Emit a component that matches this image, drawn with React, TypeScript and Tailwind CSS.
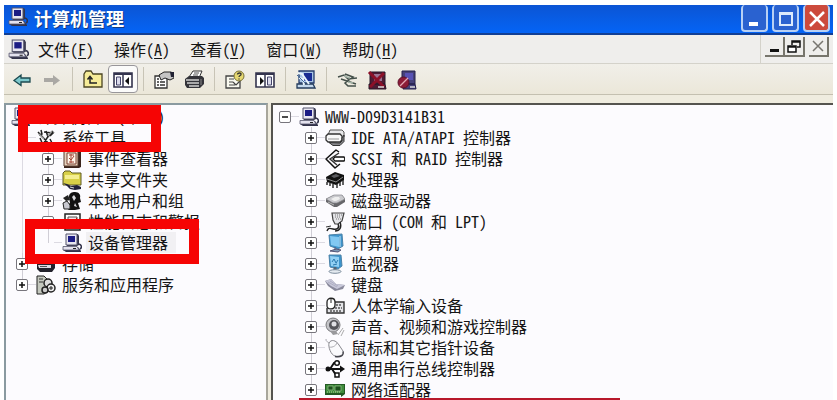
import React from "react";

type IconProps = { className?: string };

const Svg = ({ children, className = "size-5" }: { children: React.ReactNode; className?: string }) => (
  <svg viewBox="0 0 20 20" className={`${className} shrink-0`} fill="none" aria-hidden="true">
    {children}
  </svg>
);

const Computer = ({ className }: IconProps) => (
  <Svg className={className}>
    <path d="M5 1h11l1 2v9l-2 1H5z" fill="#33334a" />
    <path d="M4 1h11v11H4z" fill="#e8e6f0" stroke="#55556c" />
    <path d="M6 3h7v6H6z" fill="#1c1c84" />
    <path d="M2 14h14l3 4v1H4l-3-2z" fill="#33334a" />
    <path d="M1 13.500h14l2 3.500H1z" fill="#e4e2ee" stroke="#55556c" strokeWidth=".8" />
    <path d="M11 15.500h3" stroke="#222" />
    <path d="M17 11c3 1 3 4 1 5" stroke="#33334a" strokeWidth="1.500" />
  </Svg>
);

const Tools = () => (
  <Svg>
    <path d="M2 4l12 13M5 2l1 4-3 1M8 4l9 1-3 3M17 3l-6 7-5 8M4 10l3 7M10 3l2 6M14 11l3 6" stroke="#222" strokeWidth="1.500" />
    <path d="M3 6l5 5M12 8l4-5" stroke="#999" strokeWidth="1.500" />
  </Svg>
);

const EventViewer = () => (
  <Svg>
    <path d="M2 2l2-1h15v17l-2 1H2z" fill="#3a241c" />
    <path d="M2 2h14v15H2z" fill="#e6d2be" stroke="#5a3a2c" />
    <path d="M5 4h9v11H5z" fill="#fff6ea" stroke="#7a4030" />
    <path d="M7 6h5M7 9l2 2 3-4M7 13h5M9 5v9" stroke="#a04030" />
  </Svg>
);

const SharedFolder = () => (
  <Svg>
    <path d="M1 3l2-2h5l2 2h9v12H1z" fill="#d8d048" stroke="#5c5820" />
    <path d="M3 5h14v4H3z" fill="#f4ee90" />
    <path d="M1 13l4 1 4 2 6-1 4 2v2l-6 1-5-1-3-3z" fill="#22223a" />
    <path d="M8 17l4 1" stroke="#ddd" />
  </Svg>
);

const Users = () => (
  <Svg>
    <path d="M7 6c0-4 3-5 6-5 4 0 6 3 5 6l1 4-3 1 2 6-5 1H7l-4-3 5-4z" fill="#111" />
    <path d="M10 6l2-2 2 3-2 3zM13 12l2 4-3-1z" fill="#d8d8dc" />
    <path d="M1 12l4-2 3 4v4H2z" fill="#c8c8d0" stroke="#222" />
    <path d="M1 7l5-3 2 5-4 1z" fill="#222" />
  </Svg>
);

const Performance = () => (
  <Svg>
    <path d="M3 2h15v16H3z" fill="#fff" stroke="#222" strokeWidth="1.500" />
    <path d="M6 5h9v7H6z" fill="#f0e4e8" stroke="#555" />
    <path d="M6 11l3-4 2 3 4-4" stroke="#a22" />
    <path d="M6 15h9" stroke="#222" strokeWidth="2" />
  </Svg>
);

const Storage = () => (
  <Svg>
    <path d="M1 4h13l5 3v7l-3 4H4l-3-3z" fill="#22222c" />
    <path d="M2 5h11v4H2zM2 11h13v3H3z" fill="#dcdce4" />
    <path d="M4 12.500h7M4 7h6" stroke="#555" />
  </Svg>
);

const Services = () => (
  <Svg>
    <path d="M1 1h7l3 3v13l-3 2H1z" fill="#c4c8be" stroke="#222" />
    <path d="M3 4h4M3 7h4" stroke="#333" />
    <circle cx="12" cy="8" r="4" fill="#ddd" stroke="#222" strokeWidth="1.500" />
    <circle cx="15" cy="13" r="4" fill="#eee" stroke="#222" strokeWidth="1.500" />
    <circle cx="9" cy="15" r="3" fill="#ccc" stroke="#222" strokeWidth="1.500" />
    <path d="M15 11v4M13 13h4" stroke="#222" />
  </Svg>
);

const Ide = () => (
  <Svg>
    <path d="M5 2h12l2 2v5l-2 2H5L3 7z" fill="#e8e8ea" stroke="#555" />
    <path d="M1 8l2-2h12l2 2v4l-2 2H3l-2-2z" fill="#f8f8f8" stroke="#333" strokeWidth="1.300" />
    <path d="M4 14.500l4 3h7l4-4V7l-2 3v3l-2 2z" fill="#88888c" stroke="#333" />
    <path d="M3 11h11" stroke="#999" />
  </Svg>
);

const Scsi = () => (
  <Svg>
    <path d="M14 3l-3-2L1 10l9 9 5-4" stroke="#111" strokeWidth="1.500" strokeLinejoin="round" />
    <path d="M14 4L5 10l7 6" stroke="#333" strokeWidth="1.400" />
    <path d="M8 10l2-2h9l1 2-1 2h-9z" fill="#fff" stroke="#111" strokeWidth="1.300" />
  </Svg>
);

const Cpu = () => (
  <Svg>
    <path d="M1 7l9-5 9 3v5l-8 5-9-3z" fill="#111" />
    <path d="M6 6l5-2 4 2-6 2z" fill="#5c5c60" />
    <path d="M2 12v3M5 13v3M8 14v4M12 14v4M15 12v4M18 10v5" stroke="#222" strokeWidth="1.400" />
    <path d="M2 9l9 3 7-5" stroke="#aaa" strokeWidth=".8" />
  </Svg>
);

const Disk = () => (
  <Svg>
    <path d="M1 8l8-4h8l3 4v3l-8 5H9l-8-5z" fill="#66666a" />
    <path d="M1 8l8-4h8l3 4-8 4H8z" fill="#cacace" stroke="#88888c" strokeWidth=".7" />
    <path d="M6 8l4-2h4l1 2-4 2H9z" fill="#eee" />
    <path d="M3 11l6 3" stroke="#bbb" />
  </Svg>
);

const Port = () => (
  <Svg>
    <path d="M7 1h12l-2 8-4 3h-3L8 8z" fill="#e4e4e8" stroke="#444" strokeWidth="1.200" />
    <path d="M10 3h7M10 5h6M11 7h5" stroke="#777" strokeDasharray="1 1" />
    <path d="M13 12c2 4-1 6-5 5s-5-1-6 2M15 10c2 5 0 9-5 9" stroke="#222" strokeWidth="1.400" />
    <path d="M1 15l5-1" stroke="#333" />
  </Svg>
);

const BluePc = () => (
  <Svg>
    <path d="M4 2l13-1 1 12-5 3-8-3z" fill="#3d94cc" stroke="#4c82a8" />
    <path d="M5 3l9 1v10l-8-2z" fill="#82c8f2" />
    <path d="M15 3v11" stroke="#c6e4f6" />
    <path d="M10 14v3M5 18l6-2 5 1-3 2z" fill="#7c98b4" stroke="#557" />
  </Svg>
);

const Monitor = () => (
  <Svg>
    <path d="M4 1l12 0 1 11-4 3-8-2z" fill="#3d94cc" stroke="#4c82a8" />
    <path d="M5 2l9 1 0 10-8-1z" fill="#92d0f4" />
    <path d="M7 8l2-3 2 4 2-3M8 11l4-1" stroke="#2878ae" />
    <path d="M10 13v4" stroke="#567" strokeWidth="3" />
    <ellipse cx="10" cy="17.500" rx="6" ry="1.800" fill="#e4eaf0" stroke="#7c8c9c" />
  </Svg>
);

const Keyboard = () => (
  <Svg>
    <path d="M0 6l6-2 5 5 9 1-2 4-8 2-7-5z" fill="#8a8a9c" />
    <path d="M0 6l6-2 5 5 9 1-8 4-6-3z" fill="#c8c8da" />
    <path d="M3 7l9 5M5 6l8 5" stroke="#a4a4b8" strokeWidth=".7" />
  </Svg>
);

const Hid = () => (
  <Svg>
    <path d="M9 6h10v11H2v-5" fill="#e4e4e8" stroke="#333" strokeWidth="1.400" />
    <path d="M11 9h6M10 12h7M5 15h12" stroke="#555" strokeDasharray="2 1" strokeWidth="1.500" />
    <path d="M2 6c0-5 8-5 8 0v3c0 5-8 5-8 1z" fill="#fff" stroke="#222" strokeWidth="1.300" />
    <path d="M6 2v5" stroke="#222" />
  </Svg>
);

const Speaker = () => (
  <Svg>
    <circle cx="8" cy="8" r="7" fill="#c4c4c8" stroke="#77777a" />
    <circle cx="9" cy="8" r="5" fill="#55555a" />
    <circle cx="9" cy="7" r="2.500" fill="#e0e0e4" />
    <path d="M5 14l3 4 5-1-2-3z" fill="#99999c" />
    <path d="M13 18l5-7M16 19l3-6" stroke="#aaa" />
  </Svg>
);

const Mouse = () => (
  <Svg>
    <path d="M4 5c2-4 7-3 10 2l4 6c2 4-4 6-8 5-4-1-7-9-6-13z" fill="#fafafc" stroke="#88888e" />
    <path d="M4 9c4 1 8-2 8-5M4 5C2 3 1 4 1 1" stroke="#aaaab0" />
    <path d="M10 18.500c6 1 9-1 8-5" stroke="#44444c" strokeWidth="1.300" />
  </Svg>
);

const Usb = () => (
  <Svg>
    <path d="M2 10h16M5 10l4-6h4M7 10l4 6h3" stroke="#111" strokeWidth="1.900" />
    <circle cx="3" cy="10" r="2.500" fill="#111" />
    <path d="M15 6.500l5 3.500-5 3.500z" fill="#111" />
    <circle cx="12" cy="4" r="2.300" fill="#fff" stroke="#111" strokeWidth="1.500" />
    <path d="M10 14h4v4h-4z" fill="#fff" stroke="#111" strokeWidth="1.500" />
  </Svg>
);

const NetCard = () => (
  <Svg>
    <path d="M0 4h20v10l-4 3v-2H0z" fill="#245a24" />
    <path d="M1 5h18v8H1z" fill="#3f8c3c" />
    <path d="M3 6h5v4H3zM10 6h6v5h-6z" fill="#1c501c" stroke="#9cc490" strokeWidth=".7" />
    <path d="M2 12h13" stroke="#b8d4a0" strokeDasharray="1 1" />
  </Svg>
);

const Arrow = ({ forward = false }: { forward?: boolean }) => (
  <Svg>
    {forward ? (
      <path d="M2 8h9V5l7 5.500-7 5V12H2z" fill="#aaa8a4" />
    ) : (
      <path d="M18 8H9V5L2 10.500l7 5V12h9z" fill="#7cc8cc" stroke="#1c4a50" strokeWidth="1.300" />
    )}
  </Svg>
);

const UpFolder = () => (
  <Svg>
    <path d="M1 4l2-3h5l2 3h9v13H1z" fill="#f6ec98" stroke="#4a4422" strokeWidth="1.300" />
    <path d="M7 8v5h7M4.500 9.500L7 6.500l2.500 3" stroke="#222" strokeWidth="1.500" />
  </Svg>
);

const SplitPane = ({ flip = false }: { flip?: boolean }) => (
  <Svg>
    <path d="M1 3h18v14H1z" fill="#fff" stroke="#34344e" strokeWidth="1.600" />
    <path d="M1 4h18" stroke="#34344e" strokeWidth="2" />
    {flip ? (
      <>
        <path d="M12.500 7h4v8h-4z" fill="#dcdcec" stroke="#44446a" />
        <path d="M5 7l4 4-4 4z" fill="#111" />
      </>
    ) : (
      <>
        <path d="M3.500 7h4v8h-4z" fill="#dcdcec" stroke="#44446a" />
        <path d="M16 7l-4 4 4 4z" fill="#111" />
      </>
    )}
    <path d="M10 4v13" stroke="#34344e" strokeWidth="1.500" />
  </Svg>
);

const Properties = () => (
  <Svg>
    <path d="M1 6h12v12H1z" fill="#fff" stroke="#333" strokeWidth="1.300" />
    <path d="M3 9h2M3 12h2M3 15h2M6 12h5M6 15h5" stroke="#333" strokeWidth="1.400" />
    <path d="M5 5l5-3h7l3 2v4l-4 2-5-2-4 2z" fill="#c4c4c4" stroke="#222" />
    <path d="M16 2h4v5h-3z" fill="#223" />
  </Svg>
);

const Printer = () => (
  <Svg>
    <path d="M5 7l4-6h9l-3 7z" fill="#fff" stroke="#333" />
    <path d="M10 3h5M9 5h5" stroke="#555" />
    <path d="M1 9l4-3h13l2 2v6l-4 4H3l-2-3z" fill="#34343a" />
    <path d="M2 10h13M3 13h12M5 16h10" stroke="#d0d0d0" strokeWidth="1.300" />
    <path d="M17 9v6" stroke="#888" />
  </Svg>
);

const Help = () => (
  <Svg>
    <path d="M1 6h11l3 4v8H1z" fill="#fafaf0" stroke="#444" strokeWidth="1.300" />
    <path d="M4 9h5M4 12h4M4 15h6M8 12l3 3 4-4" stroke="#444" strokeWidth="1.200" />
    <circle cx="14" cy="6" r="5" fill="#e6d870" stroke="#77703a" />
    <path d="M12.500 4.500c0-2 4-2 3.500 0-.3 1-2 1-2 2.500M14 8.500v1" stroke="#333" strokeWidth="1.300" />
  </Svg>
);

const ScanComputer = () => (
  <Svg>
    <path d="M3 1h15v12H3z" fill="#a8c4e4" stroke="#243c6c" strokeWidth="1.300" />
    <path d="M8 3h8v8H8z" fill="#182c94" />
    <path d="M1 14h16l2 4H1z" fill="#c4d8ec" stroke="#243c5c" strokeWidth="1.300" />
    <path d="M2 3l4 1 7 10M3 8l4 1 1 6" stroke="#e8f4fc" strokeWidth="2" />
    <path d="M1 5l8 8" stroke="#446c9c" />
  </Svg>
);

const Plug = () => (
  <Svg>
    <path d="M1 7l6-2 4 4 9-1M4 9l6 2 9 3M8 4l8 3-8 6 3 3h8" stroke="#44504a" strokeWidth="1.500" />
    <path d="M7 6l6 2M11 12l5 1" stroke="#a4b4a8" strokeWidth="1.500" />
  </Svg>
);

const Uninstall = () => (
  <Svg>
    <path d="M3 2h15v12H3zM2 14h16l1 5H2z" fill="#501c34" stroke="#28182a" />
    <path d="M7 4h8v7H7z" fill="#9c7494" />
    <path d="M2 2l15 15M17 3L3 17" stroke="#8c1028" strokeWidth="3" />
    <path d="M11 17h6" stroke="#ddd" strokeWidth="1.500" />
  </Svg>
);

const Disable = () => (
  <Svg>
    <path d="M5 1h13v13H5zM7 14h11l1 5H6z" fill="#46427a" stroke="#24204a" />
    <path d="M8 3h8v7H8z" fill="#5852b4" />
    <circle cx="6.500" cy="12.500" r="5.500" fill="#8c1c38" stroke="#5c1028" />
    <path d="M3 16l8-8" stroke="#e4a8b4" strokeWidth="1.300" />
    <path d="M13 17h5" stroke="#ddd" strokeWidth="1.500" />
  </Svg>
);

type Item = {
  text: string;
  icon: React.ReactNode;
  depth: number;
  toggle?: "+" | "-" | "none";
  last?: boolean;
  top?: boolean;
  selected?: boolean;
  guide?: boolean;
};

const Row = ({ item }: { item: Item }) => (
  <li className="flex h-[21px] items-center">
    {Array.from({ length: item.depth }, (_, i) => (
      <span key={i} className={`ml-[6px] mr-[19px] h-full w-px shrink-0 ${item.guide ? "bg-[#dcdae2]" : ""}`} />
    ))}
    <span className="flex h-full w-3 shrink-0 flex-col items-center">
      <span className={`w-px flex-1 ${item.top ? "" : "bg-[#d0ced6]"}`} />
      {item.toggle !== "none" && (
        <button
          type="button"
          aria-label={`${item.toggle === "-" ? "折叠" : "展开"} ${item.text}`}
          className="flex size-3 items-center justify-center rounded-[2px] border border-[#77757c] bg-white"
        >
          <svg viewBox="0 0 8 8" className="size-2" stroke="#111" strokeWidth="1.500">
            <path d={item.toggle === "-" ? "M1 4h6" : "M1 4h6M4 1v6"} />
          </svg>
        </button>
      )}
      <span className={`w-px flex-1 ${item.last ? "" : "bg-[#d0ced6]"}`} />
    </span>
    <span className="h-px w-2 shrink-0 bg-[#dcdae2]" />
    {item.icon}
    <span className={`ml-1 shrink-0 whitespace-pre px-0.5 leading-[21px] ${item.selected ? "bg-[#f1f0f3] pr-2" : ""}`}>{item.text}</span>
  </li>
);

const consoleTree: Item[] = [
  { text: "系统工具", icon: <Tools />, depth: 0, toggle: "none", top: true },
  { text: "事件查看器", icon: <EventViewer />, depth: 1, guide: true },
  { text: "共享文件夹", icon: <SharedFolder />, depth: 1, guide: true },
  { text: "本地用户和组", icon: <Users />, depth: 1, guide: true },
  { text: "性能日志和警报", icon: <Performance />, depth: 1, guide: true },
  { text: "设备管理器", icon: <Computer />, depth: 1, guide: true, toggle: "none", last: true, selected: true },
  { text: "存储", icon: <Storage />, depth: 0 },
  { text: "服务和应用程序", icon: <Services />, depth: 0, last: true },
];

const devices: Item[] = [
  { text: "WWW-D09D3141B31", icon: <Computer />, depth: 0, toggle: "-", top: true, last: true },
  { text: "IDE ATA/ATAPI 控制器", icon: <Ide />, depth: 1 },
  { text: "SCSI 和 RAID 控制器", icon: <Scsi />, depth: 1 },
  { text: "处理器", icon: <Cpu />, depth: 1 },
  { text: "磁盘驱动器", icon: <Disk />, depth: 1 },
  { text: "端口 (COM 和 LPT)", icon: <Port />, depth: 1 },
  { text: "计算机", icon: <BluePc />, depth: 1 },
  { text: "监视器", icon: <Monitor />, depth: 1 },
  { text: "键盘", icon: <Keyboard />, depth: 1 },
  { text: "人体学输入设备", icon: <Hid />, depth: 1 },
  { text: "声音、视频和游戏控制器", icon: <Speaker />, depth: 1 },
  { text: "鼠标和其它指针设备", icon: <Mouse />, depth: 1 },
  { text: "通用串行总线控制器", icon: <Usb />, depth: 1 },
  { text: "网络适配器", icon: <NetCard />, depth: 1, last: true },
];

const menus = [
  ["文件", "F"],
  ["操作", "A"],
  ["查看", "V"],
  ["窗口", "W"],
  ["帮助", "H"],
];

const toolGroups: { name: string; icon: React.ReactNode; pressed?: boolean }[][] = [
  [
    { name: "后退", icon: <Arrow /> },
    { name: "前进", icon: <Arrow forward /> },
  ],
  [
    { name: "上一级", icon: <UpFolder /> },
    { name: "显示/隐藏控制台树", icon: <SplitPane />, pressed: true },
  ],
  [
    { name: "属性", icon: <Properties /> },
    { name: "打印", icon: <Printer /> },
  ],
  [
    { name: "帮助", icon: <Help /> },
    { name: "显示/隐藏操作窗格", icon: <SplitPane flip /> },
  ],
  [{ name: "扫描检测硬件改动", icon: <ScanComputer /> }],
  [
    { name: "更新驱动程序", icon: <Plug /> },
    { name: "卸载", icon: <Uninstall /> },
    { name: "停用", icon: <Disable /> },
  ],
];

const captionButton = "flex h-[27px] w-[27px] items-center justify-center rounded-[4px] border-2 border-t-0 border-[#b8d0f4]";
const childButton = "flex h-5 w-5 items-center justify-center border-b-2 border-r-2 border-[#77756c]";

export default function App() {
  return (
    <main className="flex h-screen flex-col overflow-hidden bg-white px-1 pt-[5px] font-['Noto_Sans_CJK_SC',sans-serif] text-[16px] text-[#151515] [font-feature-settings:'hwid']">
      <header className="flex h-[30px] shrink-0 items-start border-b-2 border-[#123f94] bg-linear-to-b from-[#0b55d4] to-[#0464f6] pl-1 pr-[3px]">
        <Computer className="mt-0.5 size-5" />
        <h1 className="ml-[6px] flex-1 text-[18px] font-bold leading-[26px] text-white [text-shadow:1px_1px_0_#123a80]">计算机管理</h1>
        <div className="flex gap-1">
          <button type="button" aria-label="最小化" className={`${captionButton} bg-[#2a62d0]`}>
            <svg viewBox="0 0 20 20" className="size-5">
              <path d="M4 14h9v4H4z" fill="#fff" />
            </svg>
          </button>
          <button type="button" aria-label="最大化" className={`${captionButton} bg-[#2a62d0]`}>
            <svg viewBox="0 0 20 20" className="size-5" fill="none" stroke="#dceafc">
              <path d="M4 5h12v12H4z" strokeWidth="2" />
              <path d="M3 5.500h14" strokeWidth="3" />
            </svg>
          </button>
          <button type="button" aria-label="关闭" className={`${captionButton} bg-[#cc4a3c]`}>
            <svg viewBox="0 0 20 20" className="size-5" stroke="#fff" strokeWidth="2.500">
              <path d="M3 4l14 14M17 4L3 18" />
            </svg>
          </button>
        </div>
      </header>

      <nav className="flex h-[29px] shrink-0 items-center border-b border-[#d4d2ca] bg-[#efeeec] px-1">
        <Computer className="size-[21px]" />
        <div className="ml-[9px] flex flex-1 gap-5">
          {menus.map(([name, key]) => (
            <button type="button" key={key} className="whitespace-nowrap leading-[24px]">
              {name}(<u className="decoration-1 underline-offset-2">{key}</u>)
            </button>
          ))}
        </div>
        <div className="flex h-full items-center border-l border-[#d4d2ca] pb-1 pl-1">
          <button type="button" aria-label="最小化子窗口" className={childButton}>
            <svg viewBox="0 0 16 16" className="size-4">
              <path d="M4 11h9v3H4z" fill="#111" />
            </svg>
          </button>
          <button type="button" aria-label="还原子窗口" className={childButton}>
            <svg viewBox="0 0 16 16" className="size-4" fill="none" stroke="#111" strokeWidth="1.500">
              <path d="M6 7V3h8v6h-3M6 4h8" />
              <path d="M2 8h8v6H2zM2 9h8" fill="#fff" />
            </svg>
          </button>
          <button type="button" aria-label="关闭子窗口" className={`${childButton} ml-1`}>
            <svg viewBox="0 0 16 16" className="size-4" stroke="#77756f" strokeWidth="1.500">
              <path d="M3 3l10 10M13 3L3 13" />
            </svg>
          </button>
        </div>
      </nav>

      <div role="toolbar" aria-label="工具栏" className="flex h-[31px] shrink-0 items-center border-b border-[#c4c0b0] bg-linear-to-b from-[#f1efe9] to-[#ebe7d9] pl-[3px]">
        {toolGroups.map((group, g) => (
          <React.Fragment key={g}>
            {g > 0 && <span className="mx-[5px] h-6 w-px bg-[#c8c4b6]" />}
            {group.map((tool) => (
              <button
                type="button"
                key={tool.name}
                aria-label={tool.name}
                className={`flex h-7 w-[30px] items-center justify-center pt-0.5 ${tool.pressed ? "rounded-[4px] border border-[#98969a] bg-[#fbfbfa]" : ""}`}
              >
                {tool.icon}
              </button>
            ))}
          </React.Fragment>
        ))}
      </div>

      <div className="flex min-h-0 flex-1 bg-[#efecdf] pt-2">
        <section aria-label="控制台树" className="relative w-[264px] shrink-0 overflow-hidden border-2 border-b-0 border-[#8a9aa0] border-r-[#a8a69c] bg-[#fcfbfe] pt-px">
          <div className="flex h-[21px] items-center pl-[5px]">
            <Computer />
            <span className="ml-[6px] whitespace-nowrap leading-[21px]">计算机管理(本地)</span>
          </div>
          <ul className="pl-[10px]">
            {consoleTree.map((item) => (
              <Row key={item.text} item={item} />
            ))}
          </ul>
          <div className="absolute left-3 top-0 h-[47px] w-[143px] border-[10px] border-t-[19px] border-[#f60404]" />
          <div className="absolute left-[19px] top-[114px] h-[45px] w-[174px] border-[10px] border-[#f60404]" />
        </section>

        <section aria-label="设备列表" className="relative ml-[3px] min-w-0 flex-1 overflow-hidden border-l-2 border-t-2 border-[#55544f] bg-[#fcfbfe] pt-px">
          <ul className="pl-[6px]">
            {devices.map((item) => (
              <Row key={item.text} item={item} />
            ))}
          </ul>
          <div className="absolute bottom-0 left-[26px] h-[2px] w-[321px] bg-[#b8182a]" />
        </section>
      </div>
    </main>
  );
}
